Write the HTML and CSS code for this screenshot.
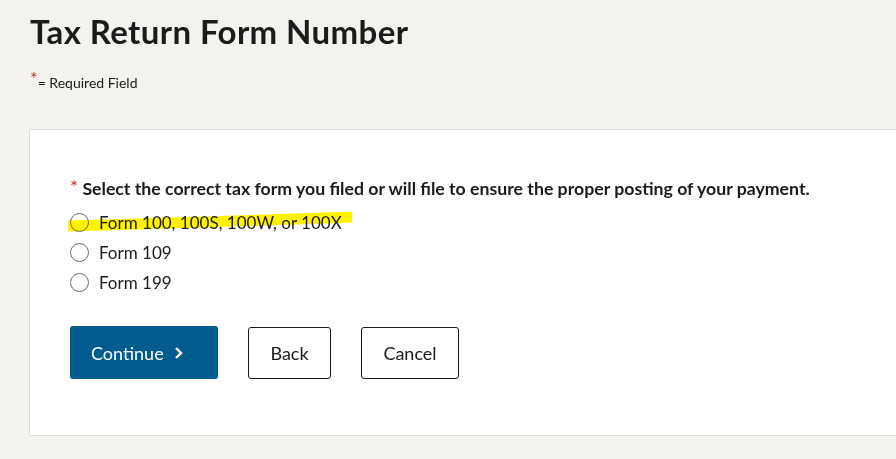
FILE: index.html
```html
<!DOCTYPE html>
<html lang="en">
<head>
<meta charset="utf-8">
<title>Tax Return Form Number</title>
<link rel="stylesheet" href="styles.css">
</head>
<body>
<main class="page">
  <h1 class="title">Tax Return Form Number</h1>
  <p class="required-note"><span class="req">*</span>= Required Field</p>
  <section class="card">
    <fieldset class="question">
      <legend class="question-label"><span class="req">*</span> Select the correct tax form you filed or will file to ensure the proper posting of your payment.</legend>
      <label class="option">
        <span class="radio"></span>
        <span class="option-text">Form 100, 100S, 100W, or 100X</span>
        <svg class="highlight" width="300" height="24" viewBox="0 0 300 24" aria-hidden="true">
          <path d="M2 17 C 50 16, 110 14, 170 12 S 255 9, 286 8" stroke="#fff200" stroke-width="11" fill="none" stroke-linecap="butt"/>
        </svg>
      </label>
      <label class="option">
        <span class="radio"></span>
        <span class="option-text">Form 109</span>
      </label>
      <label class="option">
        <span class="radio"></span>
        <span class="option-text">Form 199</span>
      </label>
    </fieldset>
    <div class="actions">
      <button class="btn btn-primary" type="button">Continue <svg class="chev" width="10" height="14" viewBox="0 0 10 14" aria-hidden="true"><path d="M2 2 L7 7 L2 12" stroke="#fff" stroke-width="2.4" fill="none"/></svg></button>
      <button class="btn btn-secondary btn-back" type="button">Back</button>
      <button class="btn btn-secondary btn-cancel" type="button">Cancel</button>
    </div>
  </section>
</main>
</body>
</html>
```

FILE: styles.css
```css
* { box-sizing: border-box; }
html, body { margin: 0; padding: 0; }
body {
  background: #f3f2ef;
  font-family: Lato, "Open Sans", "Liberation Sans", sans-serif;
  color: #1b1b1b;
  overflow: hidden;
  width: 896px;
  height: 459px;
}
.page {
  padding: 0 0 0 29px;
}
.title {
  margin: 0;
  padding: 11px 0 0 1px;
  font-size: 33px;
  line-height: 40px;
  font-weight: 700;
  color: #1b1b1b;
  letter-spacing: 0.4px;
}
.required-note {
  margin: 21px 0 0 1px;
  font-size: 14px;
  line-height: 18px;
  color: #1b1b1b;
}
.req {
  color: #c0392b;
  position: relative;
}
.required-note .req { font-size: 18px; top: -3px; }
.card {
  margin-top: 37px;
  margin-right: -30px;
  background: #fff;
  border: 1px solid #dddcd9;
  padding: 46px 40px 56px 40px;
}
.question {
  border: 0;
  margin: 0;
  padding: 0;
}
.question-label {
  padding: 0;
  font-size: 17.7px;
  line-height: 24px;
  font-weight: 700;
  color: #1b1b1b;
}
.question-label .req { font-size: 19px; top: -1px; font-weight: 400; }
.option {
  position: relative;
  display: flex;
  align-items: center;
  gap: 10px;
  height: 30px;
  font-size: 17px;
  color: #1b1b1b;
}
.question-label + .option { margin-top: 6px; }
.radio {
  width: 19px;
  height: 19px;
  border: 1px solid #6b6b6b;
  border-radius: 50%;
  background: #fff;
  flex: none;
}
.option-text { position: relative; z-index: 1; }
.highlight {
  position: absolute;
  left: -4px;
  top: 2px;
  z-index: 2;
  mix-blend-mode: multiply;
}
.actions {
  display: flex;
  gap: 30px;
  margin-top: 29px;
}
.btn {
  font-family: inherit;
  font-size: 18px;
  height: 53px;
  border-radius: 3px;
  cursor: pointer;
}
.btn-primary {
  background: #005b8e;
  color: #fff;
  border: 0;
  width: 148px;
  display: flex;
  align-items: center;
  justify-content: flex-start;
  padding: 0 0 0 21px;
  gap: 10px;
}
.btn-secondary {
  background: #fff;
  color: #1b1b1b;
  border: 1px solid #1b1b1b;
  height: 52px;
  margin-top: 1px;
}
.btn-back { width: 83px; }
.btn-cancel { width: 98px; }
.chev { display: block; }
```
